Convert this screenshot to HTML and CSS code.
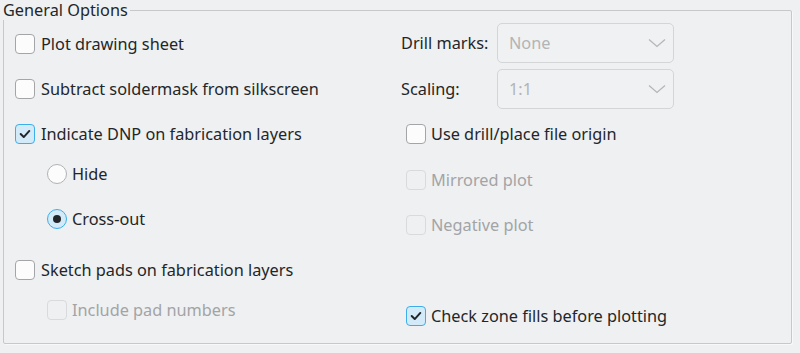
FILE: index.html
```html
<!DOCTYPE html>
<html>
<head>
<meta charset="utf-8">
<link rel="stylesheet" href="styles.css">
</head>
<body>
<fieldset class="group">
  <legend class="group-title">General Options</legend>
  <div class="columns">
    <div class="col col-left">
      <label class="row"><span class="check"></span><span class="text">Plot drawing sheet</span></label>
      <label class="row"><span class="check"></span><span class="text">Subtract soldermask from silkscreen</span></label>
      <label class="row"><span class="check checked"><svg viewBox="0 0 20 20" width="20" height="20"><path d="M5.2 10 L8.6 13.4 L14.8 6.6" fill="none" stroke="#232629" stroke-width="2.2" stroke-linecap="round" stroke-linejoin="round"/></svg></span><span class="text">Indicate DNP on fabrication layers</span></label>
      <label class="row indent tight"><span class="radio"></span><span class="text rtext">Hide</span></label>
      <label class="row indent"><span class="radio selected"><span class="dot"></span></span><span class="text rtext">Cross-out</span></label>
      <label class="row wide"><span class="check"></span><span class="text">Sketch pads on fabrication layers</span></label>
      <label class="row indent tight disabled"><span class="check"></span><span class="text rtext">Include pad numbers</span></label>
    </div>
    <div class="col col-right">
      <div class="row combo-row first">
        <span class="field-label">Drill marks:</span>
        <div class="combo"><span class="combo-text">None</span><svg class="chev" viewBox="0 0 18 10" width="18" height="10"><path d="M1 1.5 L9 8.5 L17 1.5" fill="none" stroke="#b4b6b8" stroke-width="1.3"/></svg></div>
      </div>
      <div class="row combo-row">
        <span class="field-label">Scaling:</span>
        <div class="combo"><span class="combo-text">1:1</span><svg class="chev" viewBox="0 0 18 10" width="18" height="10"><path d="M1 1.5 L9 8.5 L17 1.5" fill="none" stroke="#b4b6b8" stroke-width="1.3"/></svg></div>
      </div>
      <label class="row rcheck"><span class="check"></span><span class="text">Use drill/place file origin</span></label>
      <label class="row rcheck step disabled"><span class="check"></span><span class="text">Mirrored plot</span></label>
      <label class="row rcheck disabled"><span class="check"></span><span class="text">Negative plot</span></label>
      <label class="row rcheck far"><span class="check checked"><svg viewBox="0 0 20 20" width="20" height="20"><path d="M5.2 10 L8.6 13.4 L14.8 6.6" fill="none" stroke="#232629" stroke-width="2.2" stroke-linecap="round" stroke-linejoin="round"/></svg></span><span class="text">Check zone fills before plotting</span></label>
    </div>
  </div>
</fieldset>
</body>
</html>
```

FILE: styles.css
```css
html, body {
  margin: 0;
  padding: 0;
  background: #eff0f1;
}
body {
  font-family: "Noto Sans", "DejaVu Sans", sans-serif;
  font-size: 16.3px;
  color: #232629;
  width: 800px;
  height: 353px;
  overflow: hidden;
}
.group {
  margin: 0 0 0 3px;
  padding: 0;
  width: 789px;
  height: 344px;
  border: 1px solid #c6c8ca;
  border-radius: 2px;
  box-sizing: border-box;
  box-shadow: 1px 1px 0 #f8f8f9;
  min-width: 0;
}
.group-title {
  padding: 0 2px 0 0;
  margin-left: -1px;
  line-height: 20px;
  font-size: 16.3px;
}
.columns {
  display: grid;
  grid-template-columns: 386px 1fr;
}
.col {
  display: flex;
  flex-direction: column;
}
.col-left {
  padding-left: 11px;
  padding-top: 4px;
}
.col-right {
  padding-top: 3px;
}
.row {
  display: flex;
  align-items: center;
  height: 40px;
  margin-top: 5px;
}
.col .row:first-child { margin-top: 0; }
.row.tight { margin-top: 0; }
.row.wide { margin-top: 11px; }
.row.indent { padding-left: 32px; }
.check {
  width: 20px;
  height: 20px;
  box-sizing: border-box;
  border: 1px solid #a3a5a7;
  border-radius: 4px;
  background: #fcfcfc;
  flex: none;
  display: flex;
  align-items: center;
  justify-content: center;
}
.check svg { display: block; }
.check.checked {
  border-color: #3daee9;
  background: #d3eaf8;
}
.radio {
  width: 20px;
  height: 20px;
  box-sizing: border-box;
  border: 1px solid #b0b2b4;
  border-radius: 50%;
  background: #fcfcfc;
  flex: none;
  display: flex;
  align-items: center;
  justify-content: center;
}
.radio.selected {
  border-color: #3daee9;
  background: #d3eaf8;
}
.dot {
  width: 8px;
  height: 8px;
  border-radius: 50%;
  background: #232629;
}
.text {
  margin-left: 6px;
  white-space: nowrap;
}
.rtext { margin-left: 5px; }
.disabled .text { color: #a2a4a6; }
.disabled .check {
  border-color: #d8dadc;
  background: #eff0f1;
}
.combo-row { margin-top: 6px; }
.combo-row.first { margin-top: 0; }
.field-label {
  width: 96px;
  flex: none;
  padding-left: 11px;
  white-space: nowrap;
}
.combo {
  width: 177px;
  height: 40px;
  box-sizing: border-box;
  border: 1px solid #d3d5d7;
  border-radius: 5px;
  background: #f0f1f2;
  display: flex;
  align-items: center;
  justify-content: space-between;
  padding: 0 7px 0 11px;
  color: #b2b4b6;
}
.chev { display: block; }
.rcheck { padding-left: 16px; }
.rcheck .text { margin-left: 5px; }
.rcheck.step { margin-top: 6px; }
.rcheck.far { margin-top: 51px; }
```
